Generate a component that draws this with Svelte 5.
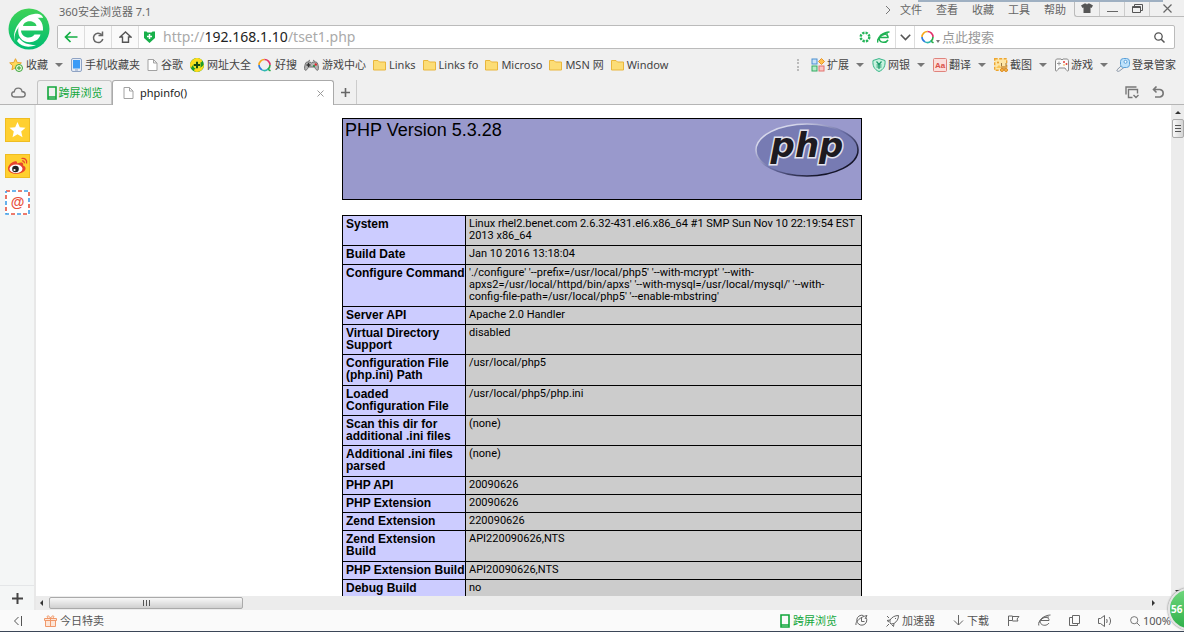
<script lang="ts">
  let host = $state('192.168.1.10');
  let query = $state('');

  const menus = ['文件', '查看', '收藏', '工具', '帮助'];

  const bookmarks = [
    { icon: 'phone', label: '手机收藏夹' },
    { icon: 'file', label: '谷歌' },
    { icon: 'site', label: '网址大全' },
    { icon: 'ring', label: '好搜' },
    { icon: 'pad', label: '游戏中心' },
    { icon: 'folder', label: 'Links' },
    { icon: 'folder', label: 'Links fo' },
    { icon: 'folder', label: 'Microso' },
    { icon: 'folder', label: 'MSN 网' },
    { icon: 'folder', label: 'Window' }
  ];

  const tools = [
    { icon: 'apps', label: '扩展', drop: true },
    { icon: 'bank', label: '网银', drop: true },
    { icon: 'translate', label: '翻译', drop: true },
    { icon: 'shot', label: '截图', drop: true },
    { icon: 'game', label: '游戏', drop: true },
    { icon: 'key', label: '登录管家', drop: false }
  ];

  const info = [
    ['System', 'Linux rhel2.benet.com 2.6.32-431.el6.x86_64 #1 SMP Sun Nov 10 22:19:54 EST\n2013 x86_64'],
    ['Build Date', 'Jan 10 2016 13:18:04'],
    ['Configure Command', "'./configure' '--prefix=/usr/local/php5' '--with-mcrypt' '--with-\napxs2=/usr/local/httpd/bin/apxs' '--with-mysql=/usr/local/mysql/' '--with-\nconfig-file-path=/usr/local/php5' '--enable-mbstring'"],
    ['Server API', 'Apache 2.0 Handler'],
    ['Virtual Directory\nSupport', 'disabled'],
    ['Configuration File\n(php.ini) Path', '/usr/local/php5'],
    ['Loaded\nConfiguration File', '/usr/local/php5/php.ini'],
    ['Scan this dir for\nadditional .ini files', '(none)'],
    ['Additional .ini files\nparsed', '(none)'],
    ['PHP API', '20090626'],
    ['PHP Extension', '20090626'],
    ['Zend Extension', '220090626'],
    ['Zend Extension\nBuild', 'API220090626,NTS'],
    ['PHP Extension Build', 'API20090626,NTS'],
    ['Debug Build', 'no']
  ];
</script>

{#snippet icon(name: string)}
  {#if name === 'phone'}
    <svg width="11" height="14" viewBox="0 0 11 14"><rect x=".5" y=".5" width="10" height="13" rx="1.5" fill="#e4ebf5" stroke="#8fa3c4" /><rect x="2" y="2" width="7" height="8.500" fill="#3b9bf7" /><path d="M4 12h3" stroke="#8fa3c4" /></svg>
  {:else if name === 'file'}
    <svg width="11" height="12" viewBox="0 0 11 12"><path d="M1 .5h5.500l3.500 3.500v7.500h-9z M6.500.5v3.500h3.500" fill="#fff" stroke="#a2a2a2" /></svg>
  {:else if name === 'site'}
    <svg width="14" height="14" viewBox="0 0 14 14"><circle cx="7" cy="7" r="7" fill="#1d9a2b" /><path d="M1 10.500A7 7 0 0 1 11 1.300C13 3 12 5 9 5c-4 0-7 2-8 5.500zM13.800 6c.7 5-4 9-9 7.600C3 12 5 10 7.500 10c3 0 5.500-1.500 6.300-4z" fill="#ffdc1a" /><circle cx="7" cy="7" r="3.800" fill="#e9e52a" /><path d="M7 3.800v6.400M3.800 7h6.400" stroke="#174a12" stroke-width="2" /></svg>
  {:else if name === 'ring'}
    <svg width="14" height="14" viewBox="0 0 14 14" fill="none" stroke-width="1.600"><path d="M1 7a5.500 5.500 0 0 1 5.500-5.500" stroke="#f6a81c" /><path d="M6.500 1.500A5.500 5.500 0 0 1 12 7" stroke="#e2326b" /><path d="M12 7a5.500 5.500 0 0 1-2 4.200l2.500 1.600" stroke="#27ab46" /><path d="M10 11.200a5.500 5.500 0 0 1-6 .7" stroke="#2fb7b1" /><path d="M4 11.900A5.500 5.500 0 0 1 1 7" stroke="#2c7be0" /></svg>
  {:else if name === 'pad'}
    <svg width="15" height="12" viewBox="0 0 15 12"><path d="M4 2.500 6 1M11 2.500 9 1" stroke="#777" /><path d="M3 3h3l1.500 1L9 3h3c2 0 3 7 2 8s-2.500-1-3.500-3h-6C3.500 10 2 12 1 11S1 3 3 3z" fill="#b5b5b5" stroke="#6c6c6c" /><path d="M4.500 4v4M2.500 6h4" stroke="#333" stroke-width="1.300" /><circle cx="10" cy="7" r="1" fill="#168a3a" /><circle cx="11.800" cy="5.500" r="1.200" fill="#dd2b2b" /></svg>
  {:else if name === 'folder'}
    <svg width="13" height="12" viewBox="0 0 13 12"><path d="M.5 11V1.500h4.500l1.500 1.500h6v8z" fill="#fcdd76" stroke="#e9b63c" /></svg>
  {:else if name === 'apps'}
    <svg width="14" height="14" viewBox="0 0 14 14"><rect x="1" y="1" width="5" height="5" fill="#cbe3fa" stroke="#4b8fd0" /><path d="m10.500.5 3 3-3 3-3-3z" fill="#ffc14d" stroke="#e8942a" /><rect x="1" y="8" width="5" height="5" fill="#b6ecc9" stroke="#32aa62" /><rect x="8" y="8" width="5" height="5" fill="#fbc6c3" stroke="#e2736e" /></svg>
  {:else if name === 'bank'}
    <svg width="14" height="14" viewBox="0 0 14 14"><path d="M7 .6 13 2.500c.5 5-1 9-6 11-5-2-6.500-6-6-11z" fill="#c8f2df" stroke="#35b587" /><path d="m4.500 3.500 2.500 3 2.500-3M7 6.500V11M4.500 7h5M4.500 9h5" fill="none" stroke="#1d9c6c" stroke-width="1.200" /></svg>
  {:else if name === 'translate'}
    <svg width="14" height="14" viewBox="0 0 14 14"><rect x=".5" y=".5" width="13" height="13" rx="1" fill="#fbdedb" stroke="#e0837c" /><text x="7" y="10" text-anchor="middle" font-size="8" font-weight="700" font-family="Liberation Sans, sans-serif" fill="#da5148">Aa</text></svg>
  {:else if name === 'shot'}
    <svg width="14" height="14" viewBox="0 0 14 14"><rect x=".7" y=".7" width="12" height="11.500" fill="#fde6a6" stroke="#eea630" stroke-width="1.400" stroke-dasharray="3 1.500" /><circle cx="4" cy="4.500" r="1" fill="#e69a28" /><path d="M2 10l3-3 3 3" fill="#f9c558" /><path d="M7.500 5v4M12 5v4" stroke="#9b7a45" /><path d="M7 8h5.500v3H7z" fill="#d9a553" /><circle cx="8" cy="12" r="1.500" fill="#f8b84b" stroke="#dc8c24" /><circle cx="12" cy="12" r="1.500" fill="#f8b84b" stroke="#dc8c24" /></svg>
  {:else if name === 'game'}
    <svg width="14" height="14" viewBox="0 0 14 14"><path d="M2 1h4l1 1 1-1h4c1 0 1.500 1 1.500 3v8c0 2-2 1-3.500-2H4C2.500 13 .5 14 .5 12V4C.5 2 1 1 2 1z" fill="#fbfbfb" stroke="#888" /><path d="M4 3.500v4M2 5.500h4" stroke="#999" /><circle cx="9" cy="4" r="1" fill="#e33d36" /><circle cx="11.500" cy="6" r="1" fill="#e33d36" /><circle cx="9" cy="7" r=".8" fill="#edb02a" /></svg>
  {:else if name === 'key'}
    <svg width="14" height="14" viewBox="0 0 14 14"><path d="m5 8-4.200 4c0 1.500 1.500 1.800 2.700.9L8 9.500" fill="#eee" stroke="#8a97a8" /><rect x="4.500" y=".5" width="9" height="9" rx="3" fill="#bfe2fb" stroke="#5aa0d8" /><circle cx="9.500" cy="3.800" r="1.500" fill="#fff" stroke="#5aa0d8" /></svg>
  {/if}
{/snippet}

{#snippet device()}
  <svg width="10" height="14" viewBox="0 0 10 14"><path d="M1 1h8v12H1zM1 11h8" fill="none" stroke="#12a73b" stroke-width="1.600" /></svg>
{/snippet}

{#snippet gauge(light: boolean)}
  <svg width="13" height="13" viewBox="0 0 13 13" fill="none" stroke={light ? '#666' : '#1fb254'} stroke-width={light ? 1 : 1.500}><path d="M3 6.500h8c.5-4-7-5-8.500 0s6 6.500 8.500 2.500M.8 11.500C-.5 7 6 1 12.500 1M1 8.500C3 4 7 3 11 3" /></svg>
{/snippet}

<div class="browser">
  <header>
    <div class="top">
      <svg class="logo" width="42" height="42" viewBox="0 0 42 42">
        <defs><linearGradient id="brand" x2="0" y2="1"><stop stop-color="#3fd257" /><stop offset="1" stop-color="#00bd72" /></linearGradient></defs>
        <circle cx="21" cy="21" r="20.500" fill="url(#brand)" />
        <path d="M13 22.500h22C36 10 25 5 16 10.500 9 15 9 26 12.500 30c5 7 18 5 20-3.500h-6c-3 5-13 4-13.500-4z" fill="#fff" />
        <path d="M15 18c1-6 12-6.500 13.500 0z" fill="#2ecb5e" />
        <path d="M7 34C4 25 14 8 35 10c-1-4-5-4.500-9-4C12 8 3 24 7 34zM9 33c4 6 12 7 19 4-8 0-13-2-17-7z" fill="#fff" />
      </svg>
      <div class="rows">
        <div class="titlebar">
          <span class="name">360安全浏览器 7.1</span>
          <svg class="more" width="6" height="10" viewBox="0 0 6 10"><path d="m1 1 4 4-4 4" fill="none" stroke="#777" /></svg>
          <nav class="menus">
            {#each menus as menu}
              <button>{menu}</button>
            {/each}
          </nav>
          <div class="window">
            <button aria-label="皮肤"><svg width="12" height="10" viewBox="0 0 12 10"><path d="M3.500.5h1.500l1 1 1-1h1.500L12 2.500 10.500 5l-1-.5V10h-7V4.500l-1 .5L0 2.500z" fill="#555" /></svg></button>
            <button aria-label="最小化"><svg width="11" height="10" viewBox="0 0 11 10"><path d="M0 8.500h11" stroke="#666" /></svg></button>
            <button aria-label="还原"><svg width="11" height="9" viewBox="0 0 11 9"><path d="M2.500 2V.5h8v6H9M.5 2.500h8v6h-8zM.5 3.500h8" fill="none" stroke="#555" /></svg></button>
            <button class="close" aria-label="关闭"><svg width="9" height="9" viewBox="0 0 9 9"><path d="m.5.5 8 8M8.500.5l-8 8" stroke="#666" stroke-width="1.200" /></svg></button>
          </div>
        </div>
        <div class="navbar">
          <button class="nav" aria-label="后退"><svg width="14" height="12" viewBox="0 0 14 12"><path d="M13.500 6H1.500M6.500 1l-5 5 5 5" fill="none" stroke="#13ae44" stroke-width="1.700" /></svg></button>
          <button class="nav" aria-label="刷新"><svg width="12" height="13" viewBox="0 0 12 13"><path d="M9.500 3.500A4.700 4.700 0 1 0 10.800 8M10.500.5v4h-4" fill="none" stroke="#666" stroke-width="1.500" /></svg></button>
          <button class="nav" aria-label="主页"><svg width="13" height="12" viewBox="0 0 13 12"><path d="M3.500 6H1l5.500-5L12 6H9.500v5.300h-6z" fill="none" stroke="#555" stroke-width="1.400" /></svg></button>
          <label class="url">
            <svg width="13" height="12" viewBox="0 0 13 12"><path d="M1 .5h2.500l1 1h4l1-1H12v6.500L6.500 12 1 7z" fill="#17b04a" /><path d="M6.500 3v5M4 5.500h5" stroke="#fff" stroke-width="1.500" /></svg>
            <span>http://</span><input class="host" aria-label="网址" bind:value={host} /><span>/tset1.php</span>
          </label>
          <div class="status-icons">
            <svg width="12" height="12" viewBox="0 0 12 12"><circle cx="6" cy="6" r="4.300" fill="none" stroke="#25b559" stroke-width="2.400" stroke-dasharray="2.300 1.080" /></svg>
            {@render gauge(false)}
          </div>
          <button class="expand" aria-label="展开"><svg width="11" height="7" viewBox="0 0 11 7"><path d="m.8.800 4.700 4.700L10.200.8" fill="none" stroke="#555" stroke-width="1.600" /></svg></button>
          <label class="search">
            {@render icon('ring')}
            <i class="arrow"></i>
            <input aria-label="搜索" placeholder="点此搜索" bind:value={query} />
            <svg width="11" height="11" viewBox="0 0 11 11"><circle cx="4.500" cy="4.500" r="3.700" fill="none" stroke="#555" stroke-width="1.300" /><path d="m7 7 3.500 3.500" stroke="#555" stroke-width="1.500" /></svg>
          </label>
        </div>
      </div>
    </div>

    <div class="bookmarks">
      <button class="mark fav">
        <svg width="14" height="14" viewBox="0 0 14 14"><path d="m6.500.7 1.700 3.800 4.200.4-3.100 2.800.9 4.100-3.700-2.100-3.600 2.100.9-4.100L.7 4.900l4.100-.4z" fill="#ffd95a" stroke="#e6a52f" /><circle cx="10" cy="10" r="3.500" fill="#eafbdc" stroke="#3ba33a" /><path d="M10 8v4M8 10h4" stroke="#2c9a2c" /></svg>
        收藏
        <i class="arrow"></i>
      </button>
      {#each bookmarks as mark}
        <a class="mark" href="#top">{@render icon(mark.icon)}{mark.label}</a>
      {/each}
      <div class="tools">
        <i class="dots"></i>
        {#each tools as tool}
          <button class="tool">{@render icon(tool.icon)}{tool.label}{#if tool.drop}<i class="arrow"></i>{/if}</button>
        {/each}
      </div>
    </div>

    <div class="tabs">
      <button class="cloud" aria-label="云"><svg width="15" height="11" viewBox="0 0 15 11"><path d="M4 10C-.5 10 0 5 3.200 4.800 4-.2 10.500 0 11 4.500c4.500.5 4 5.500 0 5.500z" fill="none" stroke="#777" stroke-width="1.400" /></svg></button>
      <button class="tab cross">{@render device()}跨屏浏览</button>
      <div class="tab active">
        {@render icon('file')}
        <span>phpinfo()</span>
        <button aria-label="关闭标签"><svg width="7" height="7" viewBox="0 0 7 7"><path d="m.5.5 6 6M6.500.5l-6 6" stroke="#999" /></svg></button>
      </div>
      <button class="add" aria-label="新标签"><svg width="9" height="9" viewBox="0 0 9 9"><path d="M4.500 0v9M0 4.500h9" stroke="#666" stroke-width="1.600" /></svg></button>
      <div class="tab-tools">
        <button aria-label="标签列表"><svg width="15" height="13" viewBox="0 0 15 13"><path d="M1 8.500V1h10.500M7.500 11.500h-4v-8h9v4M8.500 9l2.500 2.500L13.500 9" fill="none" stroke="#777" stroke-width="1.400" /></svg></button>
        <button aria-label="恢复"><svg width="13" height="12" viewBox="0 0 13 12"><path d="M1.500 3.500H8a3.800 3.800 0 0 1 0 7.500H3M4.500.5l-3 3 3 3" fill="none" stroke="#777" stroke-width="1.600" /></svg></button>
      </div>
    </div>
  </header>

  <main>
    <aside>
      <button aria-label="收藏夹"><svg width="25" height="24" viewBox="0 0 25 24"><rect x=".5" y=".5" width="24" height="23" fill="#ffd030" stroke="#efbd22" /><path d="m12.500 4 2.300 5.300 5.700.5-4.300 3.800 1.300 5.700-5-3-5 3 1.300-5.700L4.500 9.800l5.700-.5z" fill="#fff" /></svg></button>
      <button aria-label="微博"><svg width="25" height="24" viewBox="0 0 25 24"><rect x=".5" y=".5" width="24" height="23" fill="#ffd030" stroke="#efbd22" /><path d="M3 14.500c0-4 6-8.500 8.500-7 1 .6.5 2 .5 2s5-2 6 0c.5 1 0 2 0 2s3 .7 2.500 3.500c-1 6-17.500 7-17.500-.5z" fill="#e8452c" /><ellipse cx="11" cy="14.800" rx="6.500" ry="4.300" fill="#fff" /><circle cx="10.500" cy="15" r="3.300" fill="#222" /><circle cx="9.500" cy="16" r="1.100" fill="#fff" /><path d="M16.500 4.500c3.500-1 6 2 5 5M17 7c1.500-.5 2.700.7 2.200 2.200" fill="none" stroke="#e8452c" stroke-width="1.300" /></svg></button>
      <button aria-label="邮箱">
        <svg width="25" height="25" viewBox="0 0 25 25"><rect width="25" height="25" fill="#fff" /><rect x="1" y="1" width="23" height="23" fill="none" stroke="#e8503c" stroke-width="1.600" stroke-dasharray="4 8" /><rect x="1" y="1" width="23" height="23" fill="none" stroke="#3f9de6" stroke-width="1.600" stroke-dasharray="4 8" stroke-dashoffset="-6" /><text x="12.500" y="17" text-anchor="middle" font-size="14" font-weight="700" font-family="Liberation Sans, sans-serif" fill="#e8503c">@</text></svg>
      </button>
      <button class="plus" aria-label="添加"><svg width="11" height="11" viewBox="0 0 11 11"><path d="M5.500 0v11M0 5.500h11" stroke="#444" stroke-width="2" /></svg></button>
    </aside>

    <div class="view">
      <div class="page" id="top">
        <div class="banner">
          <h1>PHP Version 5.3.28</h1>
          <svg width="104" height="56" viewBox="0 0 104 56">
            <defs>
              <linearGradient id="rim" x2="1" y2="1"><stop offset=".2" stop-color="#d5d6ea" /><stop offset=".5" stop-color="#6a6ea5" /><stop offset=".8" stop-color="#15152a" /></linearGradient>
            </defs>
            <ellipse cx="52" cy="28" rx="51" ry="26" fill="#777bb3" stroke="url(#rim)" stroke-width="1.600" />
            <text x="52" y="35" text-anchor="middle" font-size="34" font-weight="700" font-style="italic" font-family="DejaVu Sans, sans-serif" fill="#1d1a20" stroke="#e3e3ee" stroke-width="3" paint-order="stroke">php</text>
          </svg>
        </div>
        <table>
          <tbody>
            {#each info as [key, value]}
              <tr><th scope="row">{key}</th><td>{value}</td></tr>
            {/each}
          </tbody>
        </table>
      </div>
      <div class="vbar">
        <i class="up"></i>
        <div class="thumb"><i></i></div>
        <i class="down"></i>
      </div>
      <div class="hbar">
        <i class="left"></i>
        <div class="thumb"><i></i></div>
        <i class="right"></i>
      </div>
      <div class="corner"></div>
    </div>
  </main>

  <footer>
    <button class="side" aria-label="收起侧栏"><svg width="9" height="10" viewBox="0 0 9 10"><path d="M5.500 1 1.500 5l4 4M8.500 0v10" fill="none" stroke="#555" /></svg></button>
    <button>
      <svg width="13" height="12" viewBox="0 0 13 12"><path d="M.5 3.500h12v2H.5zM1.500 5.500h10v6h-10zM6.500 3.500v8M6.500 3C4-1 2 1.500 4 3M6.500 3c2.500-4 4.500-1.500 2.500 0" fill="#fde6d8" stroke="#f0986a" /></svg>
      今日特卖
    </button>
    <div class="right">
      <button class="green">{@render device()}跨屏浏览</button>
      <button aria-label="加速"><svg width="13" height="13" viewBox="0 0 13 13" fill="none" stroke="#666"><path d="M11 3.500a5 5 0 1 1-2.500-2M1 11C0 8 5 3 12 1.500L10 5M6.500 3.500v4h3" /></svg></button>
      <button><svg width="13" height="12" viewBox="0 0 13 12" fill="none" stroke="#666"><path d="M4 5c2-3 5-4.500 8.500-4.500C12.500 4 11 6.500 8 8.500l-3 .5-1-1zM4 5 1 5.500l2 1.500M8 8.500 7.500 11.500 5.500 9.500M3 9l-2.500 2.500M9 3l1 1M1 1l2 2" /></svg>加速器</button>
      <button><svg width="11" height="11" viewBox="0 0 11 11" fill="none" stroke="#666"><path d="M5.500 0v10M1 5.500 5.500 10 10 5.500" /></svg>下载</button>
      <button aria-label="标记"><svg width="13" height="11" viewBox="0 0 13 11" fill="none" stroke="#666"><path d="M1.500 11V1h4v4.500h-4M5.500 1.500h6.500l-2 2.500 1 2H5.500" /></svg></button>
      <button aria-label="内核">{@render gauge(true)}</button>
      <button aria-label="窗口"><svg width="11" height="11" viewBox="0 0 11 11" fill="none" stroke="#666"><path d="M3.500.5h7v8h-7zM3 2.500H.5v8h8V9" /></svg></button>
      <button aria-label="声音"><svg width="14" height="12" viewBox="0 0 14 12" fill="none" stroke="#666"><path d="M.5 3.500h2l4-3v11l-4-3h-2zM8.500 4c.8 1 .8 3 0 4M11 2c2 2 2 6 0 8" /></svg></button>
      <button class="zoom"><svg width="10" height="10" viewBox="0 0 10 10" fill="none" stroke="#777"><circle cx="4.200" cy="4.200" r="3.600" /><path d="M7 7l2.800 2.800" /></svg>100%</button>
    </div>
  </footer>
  <div class="peek"></div>
  <div class="ball">56</div>
</div>

<style>
  :global(body) { margin: 0; overflow: hidden; }
  .browser {
    position: relative;
    display: flex;
    flex-direction: column;
    height: 100vh;
    box-sizing: border-box;
    overflow: hidden;
    border-bottom: 1px solid #3b4657;
    background: #f0f0f0;
    color: #444;
    font-family: "Noto Sans", "Noto Sans CJK SC", sans-serif;
    font-size: 11px;
    line-height: 16px;
  }
  button {
    display: flex;
    align-items: center;
    justify-content: center;
    padding: 0;
    border: 0;
    background: none;
    color: inherit;
    font: inherit;
    white-space: nowrap;
    cursor: pointer;
  }
  input {
    min-width: 0;
    padding: 0;
    border: 0;
    outline: none;
    background: none;
    font: inherit;
  }
  svg { display: block; flex: none; }

  .top { display: flex; }
  .logo { margin: 8px 7px 0 8px; }
  .rows { flex: 1; }
  .titlebar { display: flex; height: 25px; }
  .name { flex: 1; padding: 4px 2px; color: #666; }
  .more { margin: 5px 9px 0 0; }
  .menus {
    display: flex;
    gap: 14px;
    height: 20px;
    margin-right: 8px;
    color: #666;
  }
  .window {
    display: flex;
    height: 16px;
    border: solid #bbb;
    border-width: 0 0 1px 1px;
    border-bottom-left-radius: 3px;
  }
  .window button { width: 25px; border-right: 1px solid #ccc; }
  .window .close { width: 34px; border: 0; }

  .navbar {
    display: flex;
    height: 22px;
    margin-right: 9px;
    border: 1px solid #bbb;
    border-radius: 2px;
    background: #fff;
  }
  .nav { width: 27px; border-right: 1px solid #ddd; background: #fafafa; }
  .url {
    display: flex;
    flex: 1;
    align-items: center;
    padding-left: 4px;
    color: #aaa;
    font-size: 14px;
  }
  .url svg { margin-right: 7px; }
  .host { field-sizing: content; color: #222; }
  .status-icons { display: flex; align-items: center; gap: 6px; margin-right: 5px; }
  .expand { width: 20px; border: solid #ddd; border-width: 0 1px; }
  .search {
    display: flex;
    align-items: center;
    width: 244px;
    padding: 0 9px 0 6px;
    font-size: 13px;
  }
  .search .arrow { margin: 8px 2px 0 1px; border-width: 3px 2px 0; }
  .search input { flex: 1; color: #333; }
  .search input::placeholder { color: #999; opacity: 1; }

  .arrow {
    width: 0;
    border: solid transparent;
    border-width: 4px 4px 0;
    border-top-color: #777;
  }
  .bookmarks {
    display: flex;
    align-items: center;
    gap: 7px;
    height: 30px;
    padding: 0 8px 0 9px;
  }
  .mark, .tool {
    display: flex;
    align-items: center;
    gap: 3px;
    color: #444;
    text-decoration: none;
    white-space: nowrap;
  }
  .fav .arrow { margin: 0 1px 0 4px; }
  .tools { display: flex; align-items: center; gap: 8px; margin-left: auto; }
  .tool { gap: 2px; }
  .tool .arrow { margin-left: 5px; }
  .dots { height: 12px; margin-right: 4px; border-left: 2px dotted #bbb; }

  .tabs {
    display: flex;
    height: 24px;
    border-bottom: 1px solid #b5b5b5;
  }
  .cloud { width: 37px; }
  .tab {
    display: flex;
    align-items: center;
    box-sizing: border-box;
    height: 24px;
    border: 1px solid #c4c4c4;
    border-bottom: 0;
    border-radius: 3px 3px 0 0;
  }
  .cross { gap: 2px; width: 75px; color: #12a73b; }
  .tab.active {
    width: 222px;
    height: 25px;
    padding: 0 9px 0 10px;
    gap: 6px;
    border-color: #aaa;
    background: #fff;
    color: #222;
  }
  .active span { flex: 1; }
  .add { width: 23px; border-right: 1px solid #ccc; }
  .tab-tools { display: flex; gap: 12px; margin: 0 19px 0 auto; }

  main { display: flex; flex: 1; min-height: 0; }
  aside {
    display: flex;
    flex-direction: column;
    align-items: center;
    gap: 12px;
    width: 34px;
    padding-top: 13px;
    border-right: 2px solid #e8e8e8;
    background: #f4f6f6;
  }
  .plus {
    width: 100%;
    height: 25px;
    margin-top: auto;
    border-top: 1px solid #e4e6e8;
  }
  .view {
    display: grid;
    flex: 1;
    grid-template: 1fr 14px / 1fr 13px;
    min-width: 0;
  }
  .page {
    overflow: hidden;
    min-height: 0;
    padding: 13px 3px 0 0;
    background: #fff;
    color: #000;
    font-family: "Liberation Sans", sans-serif;
  }
  .banner {
    display: flex;
    justify-content: space-between;
    box-sizing: border-box;
    width: 520px;
    height: 82px;
    margin: 0 auto 15px;
    padding: 3px 2px;
    border: 1px solid #000;
    background: #9999cc;
  }
  h1 {
    margin: 0;
    font-size: 18px;
    font-weight: 400;
    line-height: 16px;
  }
  table {
    width: 520px;
    height: 383px;
    margin: 0 auto;
    border-collapse: collapse;
    table-layout: fixed;
    font-size: 11px;
    line-height: 12px;
  }
  th, td {
    padding: 2px 3px 3px;
    border: 1px solid #000;
    text-align: left;
    vertical-align: top;
    white-space: pre;
  }
  th {
    width: 116px;
    background: #ccccff;
    font-size: 12px;
  }
  td {
    background: #cccccc;
    font-family: Roboto, "Liberation Sans", sans-serif;
  }

  .vbar, .hbar { display: flex; align-items: center; background: #ececec; }
  .vbar { flex-direction: column; }
  .vbar > i, .hbar > i { border: 3px solid transparent; }
  .vbar .up { margin: 3px 0 5px; border-bottom-color: #333; }
  .vbar .down { margin-top: auto; border-top-color: #333; }
  .hbar .left { margin: 0 6px 0 1px; border-right-color: #333; }
  .hbar .right { margin-left: auto; border-left-color: #333; }
  .thumb {
    display: flex;
    align-items: center;
    justify-content: center;
    box-sizing: border-box;
    border: 1px solid #aaa;
    border-radius: 2px;
  }
  .vbar .thumb {
    width: 12px;
    height: 19px;
    background: linear-gradient(90deg, #f8f8f8, #d4d4d4);
  }
  .vbar .thumb i { width: 6px; height: 7px; background: repeating-linear-gradient(#555 0 1px, transparent 1px 3px); }
  .hbar .thumb {
    width: 194px;
    height: 12px;
    background: linear-gradient(#f8f8f8, #d0d0d0);
  }
  .hbar .thumb i { width: 7px; height: 6px; background: repeating-linear-gradient(90deg, #555 0 1px, transparent 1px 3px); }
  .corner { background: #ececec; }

  footer {
    display: flex;
    height: 21px;
    background: #fafafa;
    color: #555;
  }
  footer button { gap: 3px; }
  .side { width: 35px; margin-right: 9px; }
  .right { display: flex; gap: 18px; margin-left: auto; padding-right: 13px; }
  .green { color: #12a73b; }

  .peek {
    position: absolute;
    top: 0;
    right: 21px;
    width: 245px;
    height: 2px;
    background: #9fb0c2;
  }
  .ball {
    position: absolute;
    right: -26px;
    bottom: 1px;
    box-sizing: border-box;
    width: 42px;
    height: 42px;
    padding-left: 1px;
    border: 2px solid #e4e4e4;
    border-radius: 50%;
    background: linear-gradient(#6fd67c, #2fb04a);
    box-shadow: 0 0 2px #555;
    color: #fff;
    font-size: 10px;
    font-weight: 700;
    line-height: 38px;
  }
</style>
